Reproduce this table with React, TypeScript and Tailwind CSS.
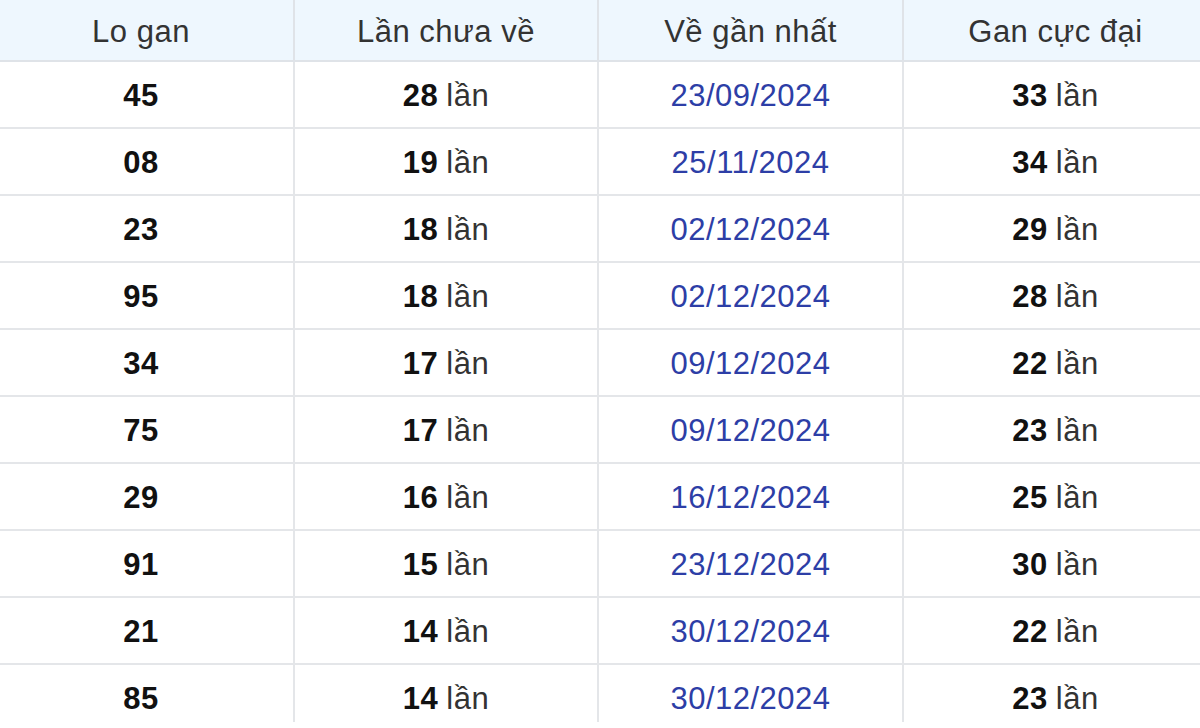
import React from "react";

const rows: [string, string, string, string][] = [
  ["45", "28", "23/09/2024", "33"],
  ["08", "19", "25/11/2024", "34"],
  ["23", "18", "02/12/2024", "29"],
  ["95", "18", "02/12/2024", "28"],
  ["34", "17", "09/12/2024", "22"],
  ["75", "17", "09/12/2024", "23"],
  ["29", "16", "16/12/2024", "25"],
  ["91", "15", "23/12/2024", "30"],
  ["21", "14", "30/12/2024", "22"],
  ["85", "14", "30/12/2024", "23"],
];

const cols = "grid grid-cols-[306px_304px_305px_303px]";

export default function App() {
  return (
    <div className="w-[1200px] h-[728px] bg-white overflow-hidden" style={{ fontFamily: '"Liberation Sans", Arial, sans-serif' }}>
      <div className="h-[722px] overflow-hidden">
        <div className="-ml-[11px] w-[1218px] text-[31px] tracking-[0.5px] text-[#222]">
          <div className={`${cols} bg-[#eef7fe] text-[#333]`}>
            {["Lo gan", "Lần chưa về", "Về gần nhất", "Gan cực đại"].map((h, i) => (
              <div
                key={h}
                className={`h-[62px] pt-[4px] flex items-center justify-center border-b-2 border-[#dfe3e8] ${i < 3 ? "border-r-2" : ""}`}
              >
                {h}
              </div>
            ))}
          </div>
          {rows.map((r, idx) => (
            <div key={idx} className={cols}>
              <div className="h-[67px] pt-[4px] flex items-center justify-center border-b-2 border-r-2 border-[#e4e6e9] font-bold text-[#111]">
                {r[0]}
              </div>
              <div className="h-[67px] pt-[4px] flex items-center justify-center border-b-2 border-r-2 border-[#e4e6e9]">
                <span className="font-bold text-[#111]">{r[1]}</span>
                <span className="ml-[8px] text-[#333]">lần</span>
              </div>
              <div className="h-[67px] pt-[4px] flex items-center justify-center border-b-2 border-r-2 border-[#e4e6e9] text-[#2d3ea6]">
                {r[2]}
              </div>
              <div className="h-[67px] pt-[4px] flex items-center justify-center border-b-2 border-[#e4e6e9]">
                <span className="font-bold text-[#111]">{r[3]}</span>
                <span className="ml-[8px] text-[#333]">lần</span>
              </div>
            </div>
          ))}
        </div>
      </div>
    </div>
  );
}
